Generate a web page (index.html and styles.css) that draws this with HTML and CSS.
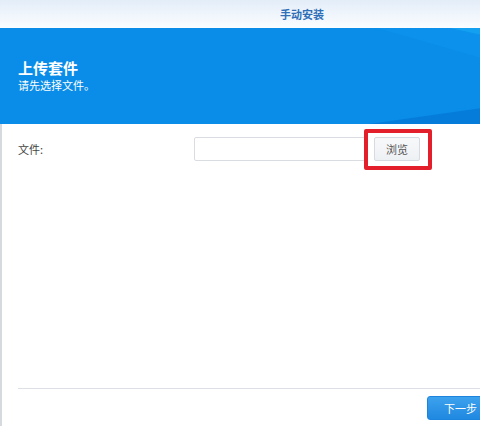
FILE: index.html
```html
<!DOCTYPE html>
<html lang="zh-CN">
<head>
<meta charset="utf-8">
<title>手动安装</title>
<link rel="stylesheet" href="styles.css">
</head>
<body>
<div class="dialog">
  <div class="titlebar">手动安装</div>
  <div class="banner">
    <svg class="banner-art" viewBox="0 0 200 96" preserveAspectRatio="none" aria-hidden="true">
      <polygon points="60,0 200,0 200,60 150,42" fill="#0c92ec"/>
      <polygon points="105,0 200,0 200,34" fill="#14a0f1"/>
      <polygon points="150,42 200,60 200,96 130,96" fill="#0a8ce8"/>
      <polygon points="55,96 150,74 200,90 200,96" fill="#067cda"/>
      <polygon points="150,74 200,64 200,90" fill="#0a86e2"/>
    </svg>
    <div class="banner-title">上传套件</div>
    <div class="banner-sub">请先选择文件。</div>
  </div>
  <div class="body">
    <div class="content">
      <div class="field">
        <label class="field-label">文件:</label>
        <div class="file-input"></div>
        <div class="browse-wrap">
          <button class="browse">浏览</button>
          <span class="highlight"></span>
        </div>
      </div>
    </div>
    <div class="footer">
      <button class="btn btn-primary">下一步</button>
    </div>
  </div>
</div>
</body>
</html>
```
FILE: styles.css
```css
html, body {
  margin: 0;
  padding: 0;
  background: #ffffff;
  overflow: hidden;
}

body {
  font-family: "Noto Sans CJK SC", "Noto Sans", sans-serif;
  font-size: 11px;
  color: #333;
}

.dialog {
  width: 604px;
  height: 426px;
  display: flex;
  flex-direction: column;
  background: #fff;
}

.titlebar {
  height: 28px;
  line-height: 28px;
  text-align: center;
  font-size: 11px;
  font-weight: bold;
  color: #2f6fb8;
  background: linear-gradient(#e3edf8, #fbfdff);
}

.banner {
  position: relative;
  height: 96px;
  box-sizing: border-box;
  padding: 30px 0 0 18px;
  background: #0a8de9;
  color: #fff;
  overflow: hidden;
}

.banner-art {
  position: absolute;
  left: 280px;
  top: 0;
  width: 324px;
  height: 96px;
}

.banner-title {
  position: relative;
  font-size: 15px;
  font-weight: bold;
  line-height: 20px;
}

.banner-sub {
  position: relative;
  font-size: 11px;
  line-height: 14px;
}

.body {
  flex: 1;
  display: flex;
  flex-direction: column;
  border-left: 2px solid #d6dadf;
}

.content {
  flex: 1;
  padding: 13px 0 0 16px;
}

.field {
  display: flex;
  align-items: center;
  height: 24px;
}

.field-label {
  width: 176px;
  font-size: 11px;
  color: #444;
}

.file-input {
  width: 172px;
  height: 22px;
  border: 1px solid #d9dde2;
  border-radius: 2px;
}

.browse-wrap {
  position: relative;
  margin-left: 6px;
}

.browse {
  display: block;
  width: 46px;
  height: 24px;
  padding: 0;
  font-family: inherit;
  font-size: 11px;
  color: #555;
  background: linear-gradient(#f7f8fa, #eef1f4);
  border: 1px solid #d6dbe1;
  border-radius: 2px;
}

.highlight {
  position: absolute;
  left: -10px;
  top: -8px;
  right: -12px;
  bottom: -9px;
  border: 4px solid #e21f2b;
  border-radius: 2px;
  pointer-events: none;
}

.footer {
  height: 30px;
  margin-left: 16px;
  border-top: 1px solid #dcdfe3;
  display: flex;
  justify-content: flex-end;
  align-items: flex-start;
  padding: 7px 103px 0 0;
}

.btn {
  width: 74px;
  height: 24px;
  padding: 0;
  font-family: inherit;
  font-size: 11px;
  color: #444;
  background: linear-gradient(#f7f8fa, #eef1f4);
  border: 1px solid #d6dbe1;
  border-radius: 3px;
}

.btn-primary {
  text-align: left;
  padding-left: 16px;
  color: #fff;
  background: linear-gradient(#3da2ee, #1f88e0);
  border-color: #1c84dc;
}
```
